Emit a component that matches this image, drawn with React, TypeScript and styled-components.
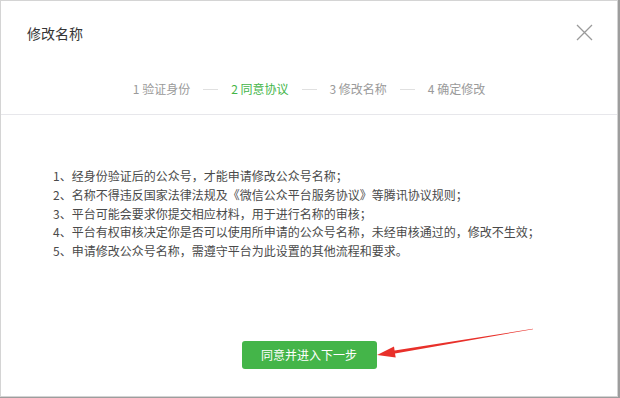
import { Fragment } from "react";
import styled, { createGlobalStyle } from "styled-components";

const GlobalStyle = createGlobalStyle`
  html, body {
    margin: 0;
    padding: 0;
    background: #9d9d9d;
  }

  body {
    font-family: "Noto Sans CJK SC", "Noto Sans", sans-serif;
    -webkit-font-smoothing: antialiased;
  }
`;

interface StepProps {
  isActive?: boolean;
}

const Dialog = styled.div`
  position: relative;
  display: flex;
  flex-direction: column;
  width: 616px;
  height: 395px;
  background: #fff;
  border: 1px solid #d4d4d4;
`;

const Header = styled.div`
  display: flex;
  align-items: center;
  justify-content: space-between;
  height: 63px;
  padding: 0 24px 0 26px;
`;

const Title = styled.h3`
  margin: 0;
  color: #353535;
  font-weight: 400;
  font-size: 14px;
  line-height: 20px;
`;

const CloseButton = styled.button`
  display: flex;
  align-items: center;
  justify-content: center;
  width: 18px;
  height: 18px;
  padding: 0;
  background: transparent;
  border: none;
  cursor: pointer;
`;

const Steps = styled.div`
  display: flex;
  align-items: center;
  justify-content: center;
  height: 50px;
  border-bottom: 1px solid #e7e7eb;
`;

const Step = styled.span<StepProps>`
  color: ${(props) => (props.isActive ? "#44b549" : "#9a9a9a")};
  font-size: 12px;
  line-height: 16px;
  white-space: nowrap;
`;

const StepDash = styled.span`
  display: block;
  width: 15px;
  height: 1px;
  margin: 0 13px;
  background: #e0e0e0;
`;

const Body = styled.div`
  display: flex;
  flex-direction: column;
  align-items: center;
  padding-top: 52px;
`;

const RuleList = styled.ol`
  align-self: stretch;
  margin: 0;
  padding: 0 0 0 52px;
  list-style: none;
`;

const RuleItem = styled.li`
  color: #4a4a4a;
  font-size: 12px;
  line-height: 18.8px;
  white-space: nowrap;
`;

const PrimaryButton = styled.button`
  width: 135px;
  height: 28px;
  margin-top: 80px;
  padding: 0;
  color: #fff;
  font-family: inherit;
  font-size: 12px;
  line-height: 28px;
  background: #44b549;
  border: none;
  border-radius: 3px;
  cursor: pointer;
`;

const ArrowLayer = styled.svg`
  position: absolute;
  top: -1px;
  left: -1px;
  pointer-events: none;
`;

const steps = ["1 验证身份", "2 同意协议", "3 修改名称", "4 确定修改"];

const rules = [
  "1、经身份验证后的公众号，才能申请修改公众号名称；",
  "2、名称不得违反国家法律法规及《微信公众平台服务协议》等腾讯协议规则；",
  "3、平台可能会要求你提交相应材料，用于进行名称的审核；",
  "4、平台有权审核决定你是否可以使用所申请的公众号名称，未经审核通过的，修改不生效；",
  "5、申请修改公众号名称，需遵守平台为此设置的其他流程和要求。",
];

export default function App() {
  return (
    <>
      <GlobalStyle />
      <Dialog>
        <Header>
          <Title>修改名称</Title>
          <CloseButton aria-label="关闭">
            <svg width="17" height="17" viewBox="0 0 17 17">
              <path d="M1 1L16 16M16 1L1 16" stroke="#9a9a9a" strokeWidth="1.3" fill="none" />
            </svg>
          </CloseButton>
        </Header>

        <Steps>
          {steps.map((label, i) => (
            <Fragment key={label}>
              {i > 0 && <StepDash />}
              <Step isActive={i === 1}>{label}</Step>
            </Fragment>
          ))}
        </Steps>

        <Body>
          <RuleList>
            {rules.map((rule) => (
              <RuleItem key={rule}>{rule}</RuleItem>
            ))}
          </RuleList>
          <PrimaryButton>同意并进入下一步</PrimaryButton>
        </Body>

        <ArrowLayer width="620" height="398" viewBox="0 0 620 398">
          <polygon
            points="377,355 394,346.5 394.6,350.6 533,328.8 533,329.2 395,353.5 395.7,357.6"
            fill="#e8302a"
          />
        </ArrowLayer>
      </Dialog>
    </>
  );
}
